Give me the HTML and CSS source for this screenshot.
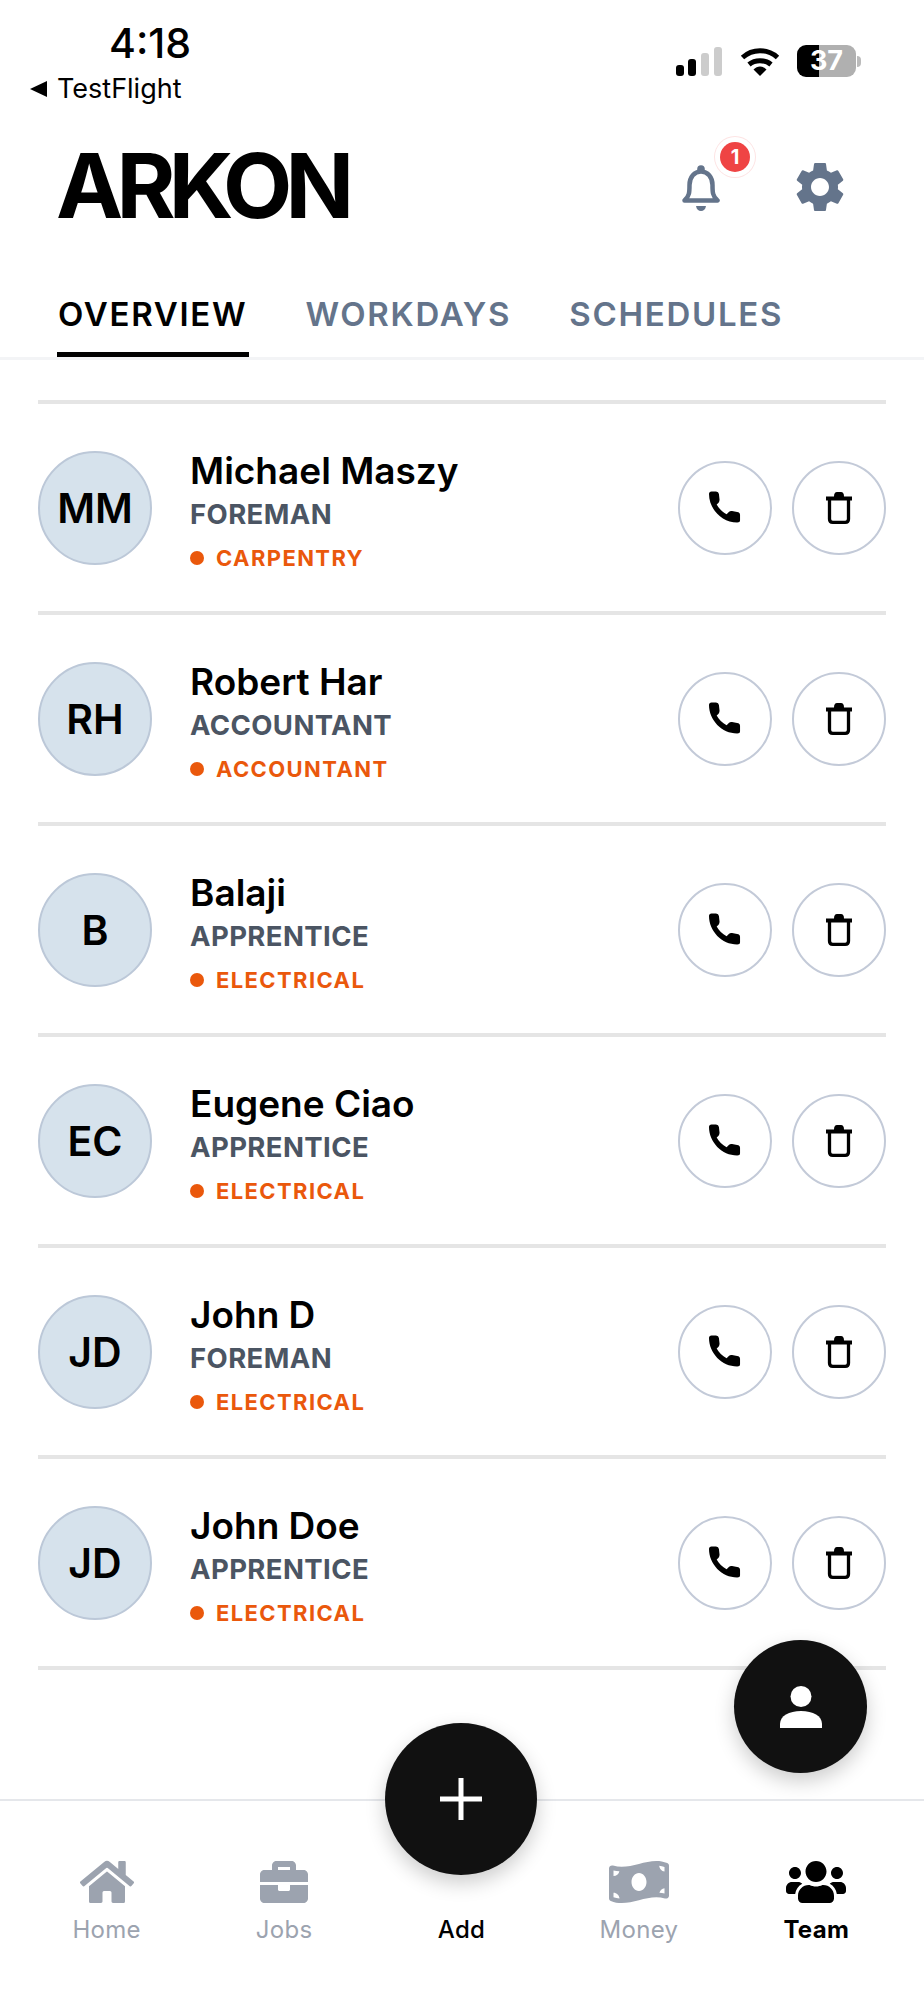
FILE: index.html
```html
<!DOCTYPE html>
<html lang="en">
<head>
  <meta charset="UTF-8">
  <title>Arkon - Team</title>
  <link rel="stylesheet" href="styles.css">
</head>
<body>
<div class="app">
  <div class="status-bar">
    <div class="status-left">
      <div class="time">4:18</div>
      <div class="back-app"><span class="back-arrow"></span>TestFlight</div>
    </div>
    <div class="status-right">
      <svg class="signal" viewBox="0 0 46 29" width="46" height="29">
        <rect x="0" y="18" width="8" height="11" rx="3" fill="#000"/>
        <rect x="12" y="12" width="8" height="17" rx="3" fill="#000"/>
        <rect x="25" y="6" width="8" height="23" rx="3" fill="#ccc"/>
        <rect x="38" y="0" width="8" height="29" rx="3" fill="#ccc"/>
      </svg>
      <svg class="wifi" viewBox="0 0 40 30" width="40" height="30">
        <path d="M2.500 11.500C12.500 2.500 27.500 2.500 37.500 11.500" fill="none" stroke="#000" stroke-width="5"/>
        <path d="M9 18.500C15 13.500 25 13.500 31 18.500" fill="none" stroke="#000" stroke-width="5"/>
        <path d="M13.500 23.500C17.500 19.500 22.500 19.500 26.500 23.500L20 30Z" fill="#000"/>
      </svg>
      <div class="battery"><div class="battery-body">37</div><div class="battery-nub"></div></div>
    </div>
  </div>

  <header class="top-header">
    <div class="logo">ARKON</div>
    <div class="header-icons">
      <div class="bell-wrap">
        <svg viewBox="0 0 38 46" width="38" height="46">
          <circle cx="19" cy="4" r="3.800" fill="#64748b"/>
          <path d="M2.500 35.500C7.500 31 7.500 27 7.500 20C7.500 12 12.500 6.500 19 6.500C25.500 6.500 30.500 12 30.500 20C30.500 27 30.500 31 35.500 35.500Z" fill="none" stroke="#64748b" stroke-width="4.500" stroke-linejoin="round"/>
          <path d="M14 41H24C23.500 44.500 21.500 46 19 46C16.500 46 14.500 44.500 14 41Z" fill="#64748b"/>
        </svg>
        <span class="badge">1</span>
      </div>
      <svg viewBox="0 0 24 24" width="60" height="60">
        <path fill="#64748b" d="M19.140 12.940c.04-.3.06-.61.06-.94 0-.32-.02-.64-.07-.94l2.030-1.580c.18-.14.23-.41.12-.61l-1.920-3.320c-.12-.22-.37-.29-.59-.22l-2.390.96c-.5-.38-1.030-.7-1.620-.94l-.36-2.540c-.04-.24-.24-.41-.48-.41h-3.840c-.24 0-.43.17-.47.41l-.36 2.540c-.59.24-1.130.57-1.620.94l-2.390-.96c-.22-.08-.47 0-.59.22L2.740 8.870c-.12.21-.08.47.12.61l2.030 1.580c-.05.3-.09.63-.09.94s.02.64.07.94l-2.030 1.580c-.18.14-.23.41-.12.61l1.920 3.320c.12.22.37.29.59.22l2.390-.96c.5.38 1.030.7 1.620.94l.36 2.540c.05.24.24.41.48.41h3.840c.24 0 .44-.17.47-.41l.36-2.540c.59-.24 1.130-.56 1.620-.94l2.390.96c.22.08.47 0 .59-.22l1.920-3.320c.12-.22.07-.47-.12-.61l-2.010-1.580zM12 15.600c-1.980 0-3.600-1.620-3.600-3.600s1.620-3.600 3.600-3.600 3.600 1.620 3.600 3.600-1.620 3.600-3.600 3.600z"/>
      </svg>
    </div>
  </header>

  <nav class="tabs">
    <div class="tab active">OVERVIEW</div>
    <div class="tab">WORKDAYS</div>
    <div class="tab">SCHEDULES</div>
  </nav>

  <main class="team-list" id="teamList"></main>

  <button class="fab-person" type="button">
    <svg viewBox="0 0 42 42" width="42" height="42">
      <circle cx="21" cy="10.500" r="10.500" fill="#fff"/>
      <path d="M0 42V38C0 30 9 25 21 25C33 25 42 30 42 38V42Z" fill="#fff"/>
    </svg>
  </button>

  <footer class="bottom-nav">
    <div class="nav-item">
      <svg class="nav-icon" viewBox="0 0 576 512"><path d="M280.370 148.260L96 300.110V464a16 16 0 0 0 16 16l112.060-.29a16 16 0 0 0 15.920-16V368a16 16 0 0 1 16-16h64a16 16 0 0 1 16 16v95.640a16 16 0 0 0 16 16.050L464 480a16 16 0 0 0 16-16V300L295.670 148.260a12.190 12.190 0 0 0-15.300 0zM571.600 251.470L488 182.560V44.050a12 12 0 0 0-12-12h-56a12 12 0 0 0-12 12v72.610L318.470 43a48 48 0 0 0-61 0L4.340 251.470a12 12 0 0 0-1.600 16.900l25.500 31A12 12 0 0 0 45.150 301l235.220-193.740a12.190 12.190 0 0 1 15.300 0L530.900 301a12 12 0 0 0 16.900-1.600l25.500-31a12 12 0 0 0-1.700-16.930z"/></svg>
      <span>Home</span>
    </div>
    <div class="nav-item">
      <svg class="nav-icon" viewBox="0 0 512 512"><path d="M320 336c0 8.840-7.160 16-16 16h-96c-8.840 0-16-7.160-16-16v-48H0v144c0 25.600 22.400 48 48 48h416c25.600 0 48-22.400 48-48V288H320v48zm144-208h-80V80c0-25.600-22.400-48-48-48H176c-25.600 0-48 22.400-48 48v48H48c-25.600 0-48 22.400-48 48v80h512v-80c0-25.600-22.400-48-48-48zm-144 0H192V96h128v32z"/></svg>
      <span>Jobs</span>
    </div>
    <div class="nav-item add-item">
      <button class="fab-add" type="button">
        <svg viewBox="0 0 42 42" width="42" height="42"><path d="M18.500 0h5v18.500H42v5H23.500V42h-5V23.500H0v-5h18.500z" fill="#fff"/></svg>
      </button>
      <span>Add</span>
    </div>
    <div class="nav-item">
      <svg class="nav-icon" viewBox="0 0 640 512"><path d="M621.160 54.460C582.370 38.190 543.550 32 504.750 32c-123.170-.01-246.330 62.340-369.500 62.340-30.890 0-61.760-3.920-92.650-13.720-3.470-1.100-6.950-1.620-10.350-1.620C15.040 79 0 92.320 0 110.810v317.260c0 12.630 7.230 24.600 18.840 29.460C57.630 473.810 96.450 480 135.250 480c123.170 0 246.340-62.350 369.510-62.350 30.890 0 61.760 3.920 92.650 13.720 3.470 1.100 6.950 1.620 10.350 1.620 17.210 0 32.250-13.320 32.250-31.810V83.930c-.01-12.640-7.240-24.600-18.850-29.470zM48 132.220c20.120 5.040 41.120 7.570 62.720 8.930C104.840 170.540 79 192.690 48 192.690v-60.470zm0 285.200v-47.780c34.370 0 62.180 27.270 63.710 61.400-22.530-1.810-43.590-6.310-63.710-13.620zM320 352c-44.190 0-80-42.990-80-96 0-53.020 35.820-96 80-96s80 42.980 80 96c0 53.030-35.830 96-80 96zm272 27.780c-17.520-4.390-35.710-6.850-54.320-8.440 5.870-26.080 27.500-45.880 54.320-49.280v57.720zm0-236.110c-30.890-3.910-54.860-29.700-55.810-61.550 19.540 2.170 38.090 6.230 55.810 12.660v48.890z"/></svg>
      <span>Money</span>
    </div>
    <div class="nav-item active">
      <svg class="nav-icon" viewBox="0 0 640 512"><path d="M96 224c35.300 0 64-28.700 64-64s-28.700-64-64-64-64 28.700-64 64 28.700 64 64 64zm448 0c35.300 0 64-28.700 64-64s-28.700-64-64-64-64 28.700-64 64 28.700 64 64 64zm32 32h-64c-17.600 0-33.500 7.100-45.100 18.600 40.300 22.100 68.900 62 75.100 109.400h66c17.700 0 32-14.300 32-32v-32c0-35.300-28.700-64-64-64zm-256 0c61.900 0 112-50.100 112-112S381.900 32 320 32 208 82.100 208 144s50.100 112 112 112zm76.800 32h-8.300c-20.800 10-43.900 16-68.500 16s-47.600-6-68.500-16h-8.300C179.600 288 128 339.600 128 403.200V432c0 26.500 21.500 48 48 48h288c26.500 0 48-21.500 48-48v-28.800c0-63.600-51.600-115.200-115.200-115.200zm-223.700-13.400C161.500 263.100 145.600 256 128 256H64c-35.300 0-64 28.700-64 64v32c0 17.700 14.300 32 32 32h65.900c6.300-47.400 34.900-87.300 75.200-109.400z"/></svg>
      <span>Team</span>
    </div>
  </footer>
</div>

<script>
  const members = [
    { initials: 'MM', name: 'Michael Maszy', role: 'FOREMAN', dept: 'CARPENTRY' },
    { initials: 'RH', name: 'Robert Har', role: 'ACCOUNTANT', dept: 'ACCOUNTANT' },
    { initials: 'B', name: 'Balaji', role: 'APPRENTICE', dept: 'ELECTRICAL' },
    { initials: 'EC', name: 'Eugene Ciao', role: 'APPRENTICE', dept: 'ELECTRICAL' },
    { initials: 'JD', name: 'John D', role: 'FOREMAN', dept: 'ELECTRICAL' },
    { initials: 'JD', name: 'John Doe', role: 'APPRENTICE', dept: 'ELECTRICAL' }
  ];

  const phoneIcon = '<svg viewBox="0 0 100 100" width="32" height="33"><path d="M8 0H22Q30 0 31 8L33 26Q33 31 30 35L24 41C30 52 42 65 55 71L62 64Q66 60 72 61L92 65Q97 67 97 73V90Q97 97 88 97C40 97 0 55 0 8Q0 0 8 0Z" fill="#000"/></svg>';
  const trashIcon = '<svg viewBox="0 0 26 33" width="26" height="33"><path d="M0 5.500H26V9.500H0Z M8 5.500Q8 1 11 1H15Q18 1 18 5.500Z" fill="#000"/><path d="M3.500 9V28Q3.500 31.300 6.800 31.300H19.200Q22.500 31.300 22.500 28V9" fill="none" stroke="#000" stroke-width="3.300"/></svg>';

  const list = document.getElementById('teamList');
  members.forEach(function (m) {
    const row = document.createElement('div');
    row.className = 'member-row';
    row.innerHTML = `
      <div class="avatar">${m.initials}</div>
      <div class="member-info">
        <div class="member-name">${m.name}</div>
        <div class="member-role">${m.role}</div>
        <div class="member-dept"><span class="dot"></span>${m.dept}</div>
      </div>
      <div class="member-actions">
        <button type="button" class="round-btn">${phoneIcon}</button>
        <button type="button" class="round-btn">${trashIcon}</button>
      </div>
    `;
    list.appendChild(row);
  });
</script>
</body>
</html>
```

FILE: styles.css
```css
html, body { margin: 0; padding: 0; background: #fff; font-family: Inter, "Liberation Sans", sans-serif; color: #000; }
button { padding: 0; border: none; background: none; font: inherit; cursor: pointer; }

.app { position: relative; width: 924px; height: 2000px; overflow: hidden; display: flex; flex-direction: column; background: #fff; }

/* status bar */
.status-bar { height: 116px; flex: none; display: flex; justify-content: space-between; box-sizing: border-box; padding: 45px 63px 0 30px; }
.status-left { margin-top: -25px; }
.time { margin-left: 79px; font-size: 41px; line-height: 46px; font-weight: 500; }
.back-app { display: flex; align-items: center; font-size: 27px; line-height: 40px; margin-top: 3px; }
.back-arrow { width: 0; height: 0; margin-right: 10px; border-top: 8px solid transparent; border-bottom: 8px solid transparent; border-right: 17px solid #000; }
.status-right { display: flex; align-items: flex-start; }
.signal { margin-top: 2px; margin-right: 18px; }
.wifi { margin-top: 1px; margin-right: 17px; }
.battery { display: flex; align-items: center; }
.battery-body { width: 59px; height: 32px; border-radius: 9px; background: linear-gradient(90deg, #000 0, #000 22px, #b0b0b0 22px); color: #fff; font-size: 27px; line-height: 32px; font-weight: 700; text-align: center; }
.battery-nub { width: 4px; height: 11px; margin-left: 1px; border-radius: 0 4px 4px 0; background: #bbb; }

/* header */
.top-header { height: 140px; flex: none; display: flex; justify-content: space-between; align-items: center; box-sizing: border-box; padding: 0 74px 0 56px; }
.logo { font-size: 90px; line-height: 100px; font-weight: 700; letter-spacing: -6.800px; }
.header-icons { display: flex; align-items: center; gap: 70px; margin-top: 2px; }
.bell-wrap { position: relative; width: 38px; height: 46px; margin-top: 2px; }
.badge { position: absolute; left: 38px; top: -23px; width: 30px; height: 30px; border-radius: 50%; background: #ef4444; box-shadow: 0 0 0 5px #fff, 0 0 0 6px #fde4e4; color: #fff; font-size: 20px; line-height: 30px; font-weight: 700; text-align: center; }

/* tabs */
.tabs { height: 104px; flex: none; display: flex; gap: 55px; box-sizing: border-box; padding: 0 0 0 57px; border-bottom: 3px solid #f3f4f6; }
.tab { height: 101px; box-sizing: border-box; padding: 37px 2px 0 1px; font-size: 33px; line-height: 42px; font-weight: 600; letter-spacing: 1.700px; color: #64748b; }
.tab.active { color: #000; border-bottom: 5px solid #000; }

/* member list */
.team-list { flex: 1; box-sizing: content-box; margin: 40px 38px 0; border-top: 4px solid #e5e5e5; }
.member-row { height: 207px; display: flex; align-items: center; border-bottom: 4px solid #e5e5e5; }
.avatar { width: 114px; height: 114px; flex: none; box-sizing: border-box; border-radius: 50%; border: 2px solid #bcc8d8; background: #d6e2ec; display: flex; align-items: center; justify-content: center; font-size: 41px; font-weight: 600; }
.member-info { margin-left: 38px; margin-top: 13px; }
.member-name { padding-top: 2px; font-size: 37px; line-height: 42px; font-weight: 600; }
.member-role { font-size: 27.500px; line-height: 44px; font-weight: 700; letter-spacing: .4px; color: #4b5563; }
.member-dept { display: flex; align-items: center; font-size: 22px; line-height: 44px; font-weight: 700; letter-spacing: 1.400px; color: #ea580c; }
.dot { width: 14px; height: 14px; margin-right: 12px; border-radius: 50%; background: #ea580c; }
.member-actions { margin-left: auto; display: flex; gap: 20px; }
.round-btn { width: 94px; height: 94px; box-sizing: border-box; border-radius: 50%; border: 2px solid #c3cad8; background: #fff; display: flex; align-items: center; justify-content: center; }

/* floating buttons */
.fab-person { position: absolute; left: 734px; top: 1640px; width: 133px; height: 133px; border-radius: 50%; background: #111; box-shadow: 0 8px 20px rgba(0,0,0,0.2); display: flex; align-items: center; justify-content: center; }
.fab-add { position: absolute; left: 50%; top: -135px; width: 152px; height: 152px; margin-left: -76px; border-radius: 50%; background: #111; box-shadow: 0 8px 20px rgba(0,0,0,0.2); display: flex; align-items: center; justify-content: center; }

/* bottom nav */
.bottom-nav { height: 201px; flex: none; display: grid; grid-template-columns: repeat(5, 177.4px); box-sizing: border-box; padding: 57px 0 0 18px; border-top: 2px solid #e5e7eb; }
.nav-item { position: relative; display: flex; flex-direction: column; align-items: center; color: #9ca3af; font-size: 24px; line-height: 30px; font-weight: 400; letter-spacing: .3px; }
.nav-icon { height: 48px; margin-bottom: 9px; fill: #9ca3af; }
.add-item { color: #000; font-weight: 500; padding-top: 57px; }
.nav-item.active { color: #000; font-weight: 700; }
.nav-item.active .nav-icon { fill: #000; }
```
